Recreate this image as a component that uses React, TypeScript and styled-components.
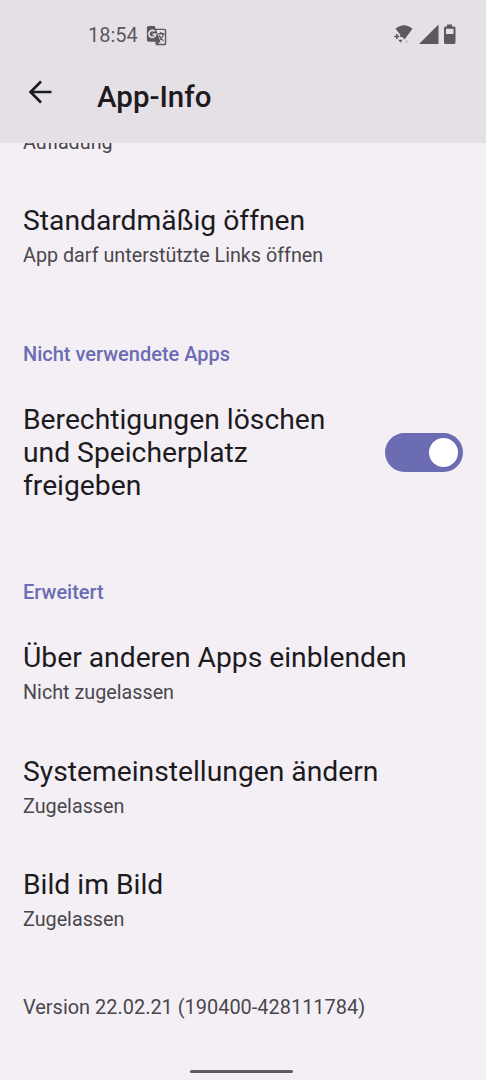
import React from 'react';
import styled, { createGlobalStyle } from 'styled-components';

const Global = createGlobalStyle`
  * { box-sizing: border-box; }
  body { margin: 0; background: #f4eff5; font-family: Roboto, sans-serif; color: #1b1b20; }
`;
const Screen = styled.div`
  width: 486px; height: 1080px; display: flex; flex-direction: column; overflow: hidden; background: #f4eff5;
`;
const Header = styled.header`
  height: 143px; flex: none; background: #e5e0e6;
`;
const StatusBar = styled.div`
  height: 70px; display: flex; align-items: center; padding: 0 29px 0 88px; color: #5b595e;
`;
const Clock = styled.span`
  font-size: 20px; line-height: 24px; margin: 0 8px 0 0;
`;
const StatusIcons = styled.div`
  margin-left: auto; display: flex; align-items: center;
`;
const Toolbar = styled.div`
  display: flex; align-items: flex-start; padding-left: 26px;
`;
const BackButton = styled.button`
  border: 0; padding: 0; margin-top: 9px; background: none; color: #1b1b20; display: flex;
`;
const Title = styled.h1`
  margin: 9px 0 0 43px; font-size: 29.5px; line-height: 36px; font-weight: 500;
`;
const Content = styled.main`
  flex: 1; min-height: 0; overflow: hidden; padding: 0 23px; display: flex; flex-direction: column;
`;
const Summary = styled.p<{ $top?: number; $size?: number }>`
  margin: ${(p) => p.$top ?? 0}px 0 0; font-size: ${(p) => p.$size ?? 19.75}px; line-height: 24px;
  color: #48474c; white-space: nowrap;
`;
const Item = styled.section<{ $top: number }>`
  margin-top: ${(p) => p.$top}px;
`;
const ItemTitle = styled.h2`
  margin: 0; font-size: 28.25px; line-height: 33px; font-weight: 400; white-space: nowrap;
`;
const Category = styled.h3<{ $top: number }>`
  margin: ${(p) => p.$top}px 0 0; font-size: 20px; line-height: 24px; font-weight: 500; color: #6b6cb2;
`;
const SwitchRow = styled.section`
  margin-top: 37px; display: flex; align-items: center; justify-content: space-between;
`;
const Switch = styled.button`
  width: 78px; height: 39px; border: 0; border-radius: 20px; padding: 0 5px; background: #6b6cb2;
  display: flex; align-items: center; justify-content: flex-end;
`;
const Thumb = styled.span`
  width: 29px; height: 29px; border-radius: 50%; background: #fff;
`;
const HomeBar = styled.div`
  width: 103px; height: 3px; border-radius: 2px; background: #5d5b60; margin: 0 0 7px 190px; flex: none;
`;

const entries = [
  { title: 'Über anderen Apps einblenden', summary: 'Nicht zugelassen', top: 37 },
  { title: 'Systemeinstellungen ändern', summary: 'Zugelassen', top: 49.5 },
  { title: 'Bild im Bild', summary: 'Zugelassen', top: 49.5 },
];

export default function App() {
  return (
    <Screen>
      <Global />
      <Header>
        <StatusBar>
          <Clock>18:54</Clock>
          <svg width="21" height="21" viewBox="0 0 24 24">
            <path fill="none" stroke="currentColor" strokeWidth="1.6" d="M11 5h10.300c.6 0 1 .4 1 1v15.300c0 .6-.4 1-1 1H12l-1-3" />
            <path fill="currentColor" d="M3 1h7l6.500 18H3c-1.100 0-2-.9-2-2V3c0-1.100.9-2 2-2Zm9 18h4l-3 3.500Z" />
            <path fill="none" stroke="#e5e0e6" strokeWidth="1.9" d="M10 7.200A4 4 0 1 0 11.200 10.800H7.500" />
            <path fill="none" stroke="currentColor" strokeWidth="1.5" d="M14 10h7M17 8v2M20 10c-.5 3-2 5-4 6.500M15 12c1 2.500 3 4.500 5 6" />
          </svg>
          <StatusIcons>
            <svg width="64" height="22" viewBox="0 0 64 22" fill="currentColor">
              <path d="M2.500 4.800C8 .1 14.500 .1 19.500 4.800L11.500 15.500 9.200 13H7.200V10.500Z" />
              <path d="M3.800 10v5M1.300 12.500h5" fill="none" stroke="currentColor" strokeWidth="1.6" />
              <path d="M5.300 15.800h4.400l-2.200 3Z" />
              <path opacity=".25" d="M12 18.500h4l-2-3Z" />
              <path d="M26 20 45.500 .5V20Z" />
              <path fillRule="evenodd" d="M54 2.500V.5h5v2h2A1.500 1.500 0 0 1 62.500 4v14.500a1.500 1.500 0 0 1-1.500 1.500h-8.500a1.500 1.500 0 0 1-1.500-1.500V4A1.500 1.500 0 0 1 52.500 2.500Zm-1 2.200V10h7.500V4.700Z" />
            </svg>
          </StatusIcons>
        </StatusBar>
        <Toolbar>
          <BackButton aria-label="Zurück">
            <svg width="28" height="26" viewBox="0 0 28 26" fill="none" stroke="currentColor" strokeWidth="2.6">
              <path d="M25.500 13H4.500M15 2.500 4.500 13 15 23.500" />
            </svg>
          </BackButton>
          <Title>App-Info</Title>
        </Toolbar>
      </Header>
      <Content>
        <Summary $top={-12}>Aufladung</Summary>
        <Item $top={49}>
          <ItemTitle>Standardmäßig öffnen</ItemTitle>
          <Summary $top={7}>App darf unterstützte Links öffnen</Summary>
        </Item>
        <Category $top={74}>Nicht verwendete Apps</Category>
        <SwitchRow>
          <ItemTitle>Berechtigungen löschen<br />und Speicherplatz<br />freigeben</ItemTitle>
          <Switch role="switch" aria-checked="true"><Thumb /></Switch>
        </SwitchRow>
        <Category $top={78}>Erweitert</Category>
        {entries.map((e) => (
          <Item key={e.title} $top={e.top}>
            <ItemTitle>{e.title}</ItemTitle>
            <Summary $top={7}>{e.summary}</Summary>
          </Item>
        ))}
        <Summary $top={62.5} $size={19.95}>Version 22.02.21 (190400-428111784)</Summary>
      </Content>
      <HomeBar />
    </Screen>
  );
}
